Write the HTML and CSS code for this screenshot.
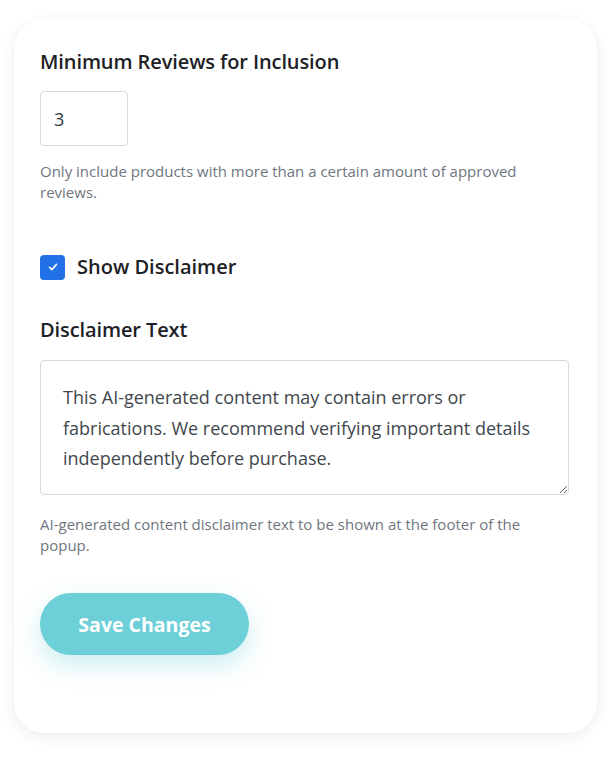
FILE: index.html
```html
<!DOCTYPE html>
<html lang="en">
<head>
<meta charset="utf-8">
<title>Settings</title>
<link rel="stylesheet" href="styles.css">
</head>
<body>
<div class="page">
  <form class="card">
    <div class="field">
      <label class="label" for="minreviews">Minimum Reviews for Inclusion</label>
      <input class="num-input" id="minreviews" type="text" value="3">
      <p class="help">Only include products with more than a certain amount of approved reviews.</p>
    </div>

    <label class="check-row">
      <span class="checkbox">
        <svg viewBox="0 0 24 24" width="14" height="14"><path d="M6 12.5l4 4 8-9" fill="none" stroke="#fff" stroke-width="2.6" stroke-linecap="round" stroke-linejoin="round"/></svg>
      </span>
      <span class="check-label">Show Disclaimer</span>
    </label>

    <div class="field">
      <label class="label" for="disc">Disclaimer Text</label>
      <div class="textarea-wrap">
        <textarea class="textarea" id="disc">This AI-generated content may contain errors or fabrications. We recommend verifying important details independently before purchase.</textarea>
      </div>
      <p class="help help-2">AI-generated content disclaimer text to be shown at the footer of the popup.</p>
    </div>

    <div class="actions">
      <button type="button" class="save-btn">Save Changes</button>
    </div>
  </form>
</div>
</body>
</html>
```

FILE: styles.css
```css
html, body {
  margin: 0;
  padding: 0;
  background: #ffffff;
}

body {
  font-family: "Open Sans", "Noto Sans", "Liberation Sans", sans-serif;
  color: #1f2328;
}

.page {
  padding: 19px 16px 31px 14px;
}

.card {
  display: flex;
  flex-direction: column;
  background: #ffffff;
  border-radius: 30px;
  box-shadow: 0 4px 16px rgba(0, 0, 0, 0.07), 0 0 3px rgba(0, 0, 0, 0.03);
  padding: 29px 28px 0 26px;
  height: 714px;
  box-sizing: border-box;
}

.field {
  display: flex;
  flex-direction: column;
  align-items: flex-start;
}

.label {
  font-size: 20px;
  font-weight: 600;
  line-height: 28px;
  color: #1d2125;
  letter-spacing: -0.1px;
}

.num-input {
  margin-top: 15px;
  width: 88px;
  height: 55px;
  box-sizing: border-box;
  border: 1px solid #d5d8dc;
  border-radius: 4px;
  padding: 0 13px;
  font-family: inherit;
  font-size: 18px;
  color: #333a40;
  outline: none;
}

.help {
  margin: 15px 0 0 0;
  font-size: 15px;
  line-height: 21px;
  color: #6f7680;
}

.check-row {
  display: flex;
  align-items: center;
  gap: 12px;
  margin-top: 50px;
  height: 28px;
}

.checkbox {
  width: 25px;
  height: 25px;
  border-radius: 4px;
  background: #2371e7;
  display: flex;
  align-items: center;
  justify-content: center;
}

.check-label {
  font-size: 20px;
  font-weight: 600;
  line-height: 28px;
  color: #1d2125;
}

.check-row + .field {
  margin-top: 35px;
}

.textarea-wrap {
  margin-top: 16px;
  width: 100%;
}

.textarea {
  display: block;
  width: 100%;
  height: 135px;
  box-sizing: border-box;
  border: 1px solid #d5d8dc;
  border-radius: 4px;
  padding: 21px 22px 20px 22px;
  font-family: inherit;
  font-size: 18px;
  line-height: 30.5px;
  color: #41474d;
  resize: vertical;
  outline: none;
  overflow: hidden;
}

.help-2 {
  margin-top: 19px;
}

.actions {
  margin-top: 37px;
}

.save-btn {
  width: 209px;
  height: 62px;
  border: none;
  border-radius: 31px;
  background: #6dcfd7;
  color: #ffffff;
  font-family: inherit;
  font-size: 19.5px;
  font-weight: 700;
  box-shadow: 0 10px 24px rgba(109, 207, 215, 0.35);
  cursor: pointer;
}
```
